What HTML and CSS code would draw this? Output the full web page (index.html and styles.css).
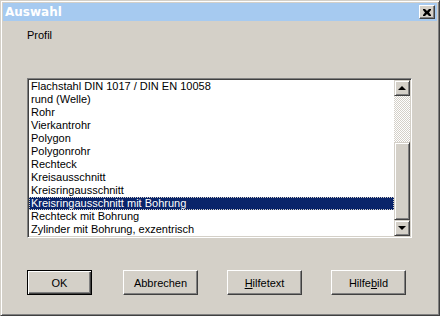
FILE: index.html
```html
<!DOCTYPE html>
<html lang="de">
<head>
  <meta charset="UTF-8">
  <title>Auswahl</title>
  <link rel="stylesheet" href="styles.css">
</head>
<body>
  <div class="window">
    <div class="titlebar">
      <span class="title">Auswahl</span>
      <button class="close" type="button">
        <svg width="8" height="7" viewBox="0 0 8 7">
          <path d="M0 0h2l2 2 2-2h2v1l-2 2.5 2 2.5v1h-2l-2-2-2 2h-2v-1l2-2.5-2-2.5z" fill="#000"/>
        </svg>
      </button>
    </div>

    <div class="content">
      <div class="label">Profil</div>

      <div class="listbox">
        <ul class="items">
          <li>Flachstahl DIN 1017 / DIN EN 10058</li>
          <li>rund (Welle)</li>
          <li>Rohr</li>
          <li>Vierkantrohr</li>
          <li>Polygon</li>
          <li>Polygonrohr</li>
          <li>Rechteck</li>
          <li>Kreisausschnitt</li>
          <li>Kreisringausschnitt</li>
          <li class="selected">Kreisringausschnitt mit Bohrung</li>
          <li>Rechteck mit Bohrung</li>
          <li>Zylinder mit Bohrung, exzentrisch</li>
        </ul>
        <div class="scrollbar">
          <div class="arrow up"><span class="tri-up"></span></div>
          <div class="track"></div>
          <div class="thumb"></div>
          <div class="arrow down"><span class="tri-down"></span></div>
        </div>
      </div>

      <div class="buttons">
        <button class="btn default" type="button">OK</button>
        <button class="btn" type="button">Abbrechen</button>
        <button class="btn" type="button"><u>H</u>ilfetext</button>
        <button class="btn" type="button">Hilfe<u>b</u>ild</button>
      </div>
    </div>
  </div>
</body>
</html>
```

FILE: styles.css
```css
body {
  margin: 0;
  background-color: #d4d0c8;
  font-family: "Liberation Sans", Arial, sans-serif;
  font-size: 11px;
  color: #000;
}

.window {
  box-sizing: border-box;
  width: 440px;
  height: 316px;
  padding: 2px;
  background-color: #d4d0c8;
  border: 1px solid;
  border-color: #d4d0c8 #404040 #404040 #d4d0c8;
  box-shadow: inset 1px 1px #fff, inset -1px -1px #808080;
}

.titlebar {
  height: 18px;
  background-color: #a6caf0;
  display: flex;
  align-items: center;
  justify-content: space-between;
  padding: 0 2px;
}

.title {
  color: #fff;
  font-weight: bold;
  font-family: "DejaVu Sans", Verdana, sans-serif;
  font-size: 12px;
}

.close {
  box-sizing: border-box;
  width: 16px;
  height: 14px;
  padding: 0;
  display: flex;
  align-items: center;
  justify-content: center;
  background-color: #d4d0c8;
  border: 1px solid;
  border-color: #fff #404040 #404040 #fff;
  box-shadow: inset -1px -1px #808080;
}

.content {
  padding: 8px 0 0 24px;
}

.label {
  line-height: 13px;
  height: 13px;
}

.listbox {
  margin-top: 36px;
  width: 385px;
  height: 160px;
  box-sizing: border-box;
  display: flex;
  background-color: #fff;
  border: 1px solid;
  border-color: #808080 #fff #fff #808080;
  box-shadow: inset 1px 1px #404040, inset -1px -1px #d4d0c8;
  padding: 1px;
}

.items {
  list-style: none;
  margin: 0;
  padding: 0;
  flex: 1;
}

.items li {
  height: 13px;
  line-height: 13px;
  padding-left: 2px;
  white-space: nowrap;
}

.items li.selected {
  background-color: #0a246a;
  color: #fff;
  outline: 1px dotted #d4d0c8;
  outline-offset: -1px;
}

.scrollbar {
  width: 16px;
  display: flex;
  flex-direction: column;
}

.arrow,
.thumb {
  box-sizing: border-box;
  background-color: #d4d0c8;
  border: 1px solid;
  border-color: #d4d0c8 #404040 #404040 #d4d0c8;
  box-shadow: inset 1px 1px #fff, inset -1px -1px #808080;
}

.arrow {
  height: 16px;
  display: flex;
  align-items: center;
  justify-content: center;
}

.tri-up,
.tri-down {
  width: 0;
  height: 0;
  border-left: 4px solid transparent;
  border-right: 4px solid transparent;
}

.tri-up {
  border-bottom: 4px solid #000;
}

.tri-down {
  border-top: 4px solid #000;
}

.track {
  height: 46px;
  background: repeating-conic-gradient(#fff 0 25%, #d4d0c8 0 50%) 0 0 / 2px 2px;
}

.thumb {
  height: 78px;
}

.buttons {
  display: flex;
  margin-top: 32px;
}

.btn {
  box-sizing: border-box;
  width: 75px;
  height: 25px;
  margin-right: 29px;
  padding: 0;
  font-family: "Liberation Sans", Arial, sans-serif;
  font-size: 11px;
  color: #000;
  background-color: #d4d0c8;
  border: 1px solid;
  border-color: #fff #404040 #404040 #fff;
  box-shadow: inset -1px -1px #808080;
}

.btn.default {
  width: 65px;
  margin-right: 31px;
  border: 1px solid #000;
  box-shadow: inset 1px 1px #fff, inset -1px -1px #404040, inset -2px -2px #808080;
}
```
